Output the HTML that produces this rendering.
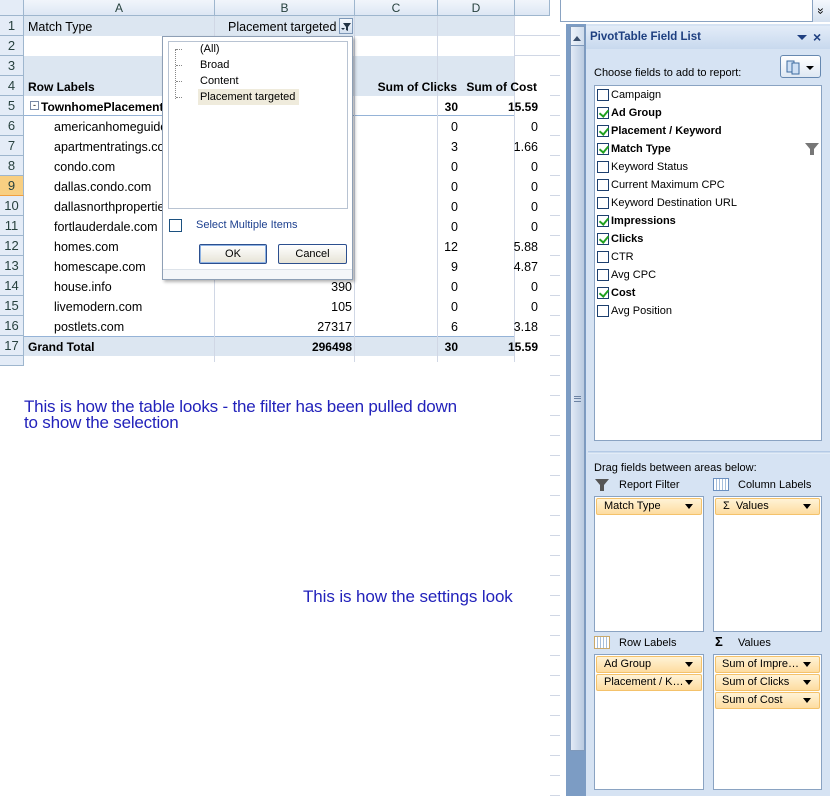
<!DOCTYPE html><html><head><meta charset="utf-8"><style>
*{margin:0;padding:0;box-sizing:border-box}
body{width:830px;height:796px;position:relative;overflow:hidden;background:#fff;font-family:"Liberation Sans",sans-serif}
.a{position:absolute;white-space:nowrap}
.c{position:absolute;font-size:12.5px;color:#000;line-height:20px;height:20px;white-space:nowrap;overflow:hidden}
.r{text-align:right}
.b{font-weight:bold}
.c.b{font-size:12px}
.hl{position:absolute;height:1px;background:#d0d7e5}
.vl{position:absolute;width:1px;background:#d0d7e5}
.rh{position:absolute;left:0;width:24px;height:20px;font-size:13px;line-height:20px;text-align:center;color:#27413e;background:#e4ecf7;border-bottom:1px solid #9eb6ce;border-right:1px solid #9eb6ce}
.ch{position:absolute;top:0;height:16px;font-size:12px;line-height:16px;text-align:center;color:#27413e;background:linear-gradient(#f1f5fb,#dde7f4);border-right:1px solid #9eb6ce;border-bottom:1px solid #9eb6ce}
.p{font-family:"Liberation Sans",sans-serif;font-size:11px;color:#000}
.cb{position:absolute;width:12px;height:12px;border:1px solid #1c3f6e;background:#fff}
.ck::after{content:"";position:absolute;left:3px;top:0px;width:4px;height:7px;border:solid #21a121;border-width:0 2px 2px 0;transform:rotate(40deg)}
.fl{position:absolute;font-size:11px;line-height:18px;height:18px}
.box{position:absolute;background:#fff;border:1px solid #8aa3c2}
.pill{position:absolute;height:17px;border:1px solid #f4c26b;border-radius:2px;background:linear-gradient(#fff3d6,#fddca0);font-size:11px;line-height:15px;padding-left:7px}
.pill::after{content:"";position:absolute;right:8px;top:5px;border:4px solid transparent;border-top:5px solid #000}
</style></head><body>
<div class="ch" style="left:0;width:24px;background:#e4ecf7"></div>
<div class="ch" style="left:24px;width:191px">A</div>
<div class="ch" style="left:215px;width:140px">B</div>
<div class="ch" style="left:355px;width:83px">C</div>
<div class="ch" style="left:438px;width:77px">D</div>
<div class="ch" style="left:515px;width:35px"></div>
<div class="a" style="left:24px;top:16px;width:491px;height:20px;background:#dce6f1"></div>
<div class="a" style="left:24px;top:56px;width:491px;height:40px;background:#dce6f1"></div>
<div class="a" style="left:24px;top:336px;width:491px;height:20px;background:#dce6f1;border-top:1px solid #95b3d7"></div>
<div class="a" style="left:24px;top:115px;width:491px;height:1px;background:#95b3d7"></div>
<div class="vl" style="left:214px;top:16px;height:346px"></div>
<div class="vl" style="left:354px;top:16px;height:346px"></div>
<div class="vl" style="left:437px;top:16px;height:346px"></div>
<div class="vl" style="left:514px;top:16px;height:346px"></div>
<div class="hl" style="left:515px;top:35px;width:35px"></div>
<div class="hl" style="left:515px;top:55px;width:35px"></div>
<div class="rh" style="top:16px">1</div><div class="rh" style="top:36px">2</div><div class="rh" style="top:56px">3</div><div class="rh" style="top:76px">4</div><div class="rh" style="top:96px">5</div><div class="rh" style="top:116px">6</div><div class="rh" style="top:136px">7</div><div class="rh" style="top:156px">8</div><div class="rh" style="top:176px;background:#f8cf82;border-bottom-color:#f0a040">9</div><div class="rh" style="top:196px">10</div><div class="rh" style="top:216px">11</div><div class="rh" style="top:236px">12</div><div class="rh" style="top:256px">13</div><div class="rh" style="top:276px">14</div><div class="rh" style="top:296px">15</div><div class="rh" style="top:316px">16</div><div class="rh" style="top:336px">17</div><div class="rh" style="top:356px;height:10px"></div>
<div class="c" style="left:28px;top:17px">Match Type</div>
<div class="c" style="left:228px;top:17px">Placement targeted</div>
<div class="a" style="left:339px;top:18px;width:14px;height:16px;border:1px solid #7e98b8;background:linear-gradient(#f4f8fd,#d5e1f0)"><svg width="12" height="14"><path d="M3 4h8l-3 4v4l-2-1V8z" fill="#234"/><path d="M1 9l2 2 2-2z" fill="#234"/></svg></div>
<div class="c b" style="left:28px;top:77px">Row Labels</div>
<div class="c b r" style="left:355px;top:77px;width:102px">Sum of Clicks</div>
<div class="c b r" style="left:438px;top:77px;width:99px">Sum of Cost</div>
<div class="a" style="left:30px;top:101px;width:9px;height:9px;border:1px solid #7a8aa6;font-size:9px;line-height:6px;text-align:center">-</div>
<div class="c b" style="left:41px;top:97px;width:121px">TownhomePlacement</div>
<div class="c b r" style="left:355px;top:97px;width:103px">30</div>
<div class="c b r" style="left:438px;top:97px;width:100px">15.59</div>
<div class="c" style="left:54px;top:117px;width:108px">americanhomeguide</div><div class="c r" style="left:355px;top:117px;width:103px">0</div><div class="c r" style="left:438px;top:117px;width:100px">0</div>
<div class="c" style="left:54px;top:137px;width:108px">apartmentratings.com</div><div class="c r" style="left:355px;top:137px;width:103px">3</div><div class="c r" style="left:438px;top:137px;width:100px">1.66</div>
<div class="c" style="left:54px;top:157px">condo.com</div><div class="c r" style="left:355px;top:157px;width:103px">0</div><div class="c r" style="left:438px;top:157px;width:100px">0</div>
<div class="c" style="left:54px;top:177px">dallas.condo.com</div><div class="c r" style="left:355px;top:177px;width:103px">0</div><div class="c r" style="left:438px;top:177px;width:100px">0</div>
<div class="c" style="left:54px;top:197px;width:108px">dallasnorthproperties</div><div class="c r" style="left:355px;top:197px;width:103px">0</div><div class="c r" style="left:438px;top:197px;width:100px">0</div>
<div class="c" style="left:54px;top:217px;width:108px">fortlauderdale.com</div><div class="c r" style="left:355px;top:217px;width:103px">0</div><div class="c r" style="left:438px;top:217px;width:100px">0</div>
<div class="c" style="left:54px;top:237px">homes.com</div><div class="c r" style="left:355px;top:237px;width:103px">12</div><div class="c r" style="left:438px;top:237px;width:100px">5.88</div>
<div class="c" style="left:54px;top:257px">homescape.com</div><div class="c r" style="left:355px;top:257px;width:103px">9</div><div class="c r" style="left:438px;top:257px;width:100px">4.87</div>
<div class="c" style="left:54px;top:277px">house.info</div><div class="c r" style="left:215px;top:277px;width:137px">390</div><div class="c r" style="left:355px;top:277px;width:103px">0</div><div class="c r" style="left:438px;top:277px;width:100px">0</div>
<div class="c" style="left:54px;top:297px">livemodern.com</div><div class="c r" style="left:215px;top:297px;width:137px">105</div><div class="c r" style="left:355px;top:297px;width:103px">0</div><div class="c r" style="left:438px;top:297px;width:100px">0</div>
<div class="c" style="left:54px;top:317px">postlets.com</div><div class="c r" style="left:215px;top:317px;width:137px">27317</div><div class="c r" style="left:355px;top:317px;width:103px">6</div><div class="c r" style="left:438px;top:317px;width:100px">3.18</div>
<div class="c b" style="left:28px;top:337px">Grand Total</div><div class="c b r" style="left:215px;top:337px;width:137px">296498</div><div class="c b r" style="left:355px;top:337px;width:103px">30</div><div class="c b r" style="left:438px;top:337px;width:100px">15.59</div>
<!-- popup -->
<div class="a" style="left:162px;top:36px;width:191px;height:244px;background:#fff;border:1px solid #8e9fb5;box-shadow:2px 2px 3px rgba(0,0,0,.3)">
 <div class="a" style="left:5px;top:4px;width:180px;height:168px;border:1px solid #b8c3d2"></div>
 <div class="a" style="left:12px;top:12px;width:1px;height:50px;border-left:1px dotted #888"></div>
 <div class="a" style="left:13px;top:12px;width:6px;border-top:1px dotted #888"></div>
 <div class="a" style="left:13px;top:28px;width:6px;border-top:1px dotted #888"></div>
 <div class="a" style="left:13px;top:44px;width:6px;border-top:1px dotted #888"></div>
 <div class="a" style="left:13px;top:60px;width:6px;border-top:1px dotted #888"></div>
 <div class="a p" style="left:37px;top:4px;line-height:16px">(All)</div>
 <div class="a p" style="left:37px;top:20px;line-height:16px">Broad</div>
 <div class="a p" style="left:37px;top:36px;line-height:16px">Content</div>
 <div class="a p" style="left:35px;top:52px;line-height:16px;background:#efebdc;padding:0 4px 0 2px">Placement targeted</div>
 <div class="a" style="left:6px;top:182px;width:13px;height:13px;border:1px solid #1c5180"></div>
 <div class="a p" style="left:33px;top:182px;color:#1c3f8e">Select Multiple Items</div>
 <div class="a p" style="left:36px;top:207px;width:68px;height:20px;border:1px solid #2c4f8e;border-radius:2px;background:linear-gradient(#fff,#e6e3d6);text-align:center;line-height:18px;box-shadow:inset 0 0 0 1px #8db2e3">OK</div>
 <div class="a p" style="left:115px;top:207px;width:69px;height:20px;border:1px solid #2c4f8e;border-radius:2px;background:linear-gradient(#fff,#e6e3d6);text-align:center;line-height:18px">Cancel</div>
 <div class="a" style="left:0;top:232px;width:189px;height:10px;border-top:1px solid #dde3ea;background:#f4f6f9"></div>
</div>
<div class="a" style="left:24px;top:399px;font-size:17px;line-height:16px;color:#2222bb;letter-spacing:-0.2px">This is how the table looks - the filter has been pulled down<br>to show the selection</div>
<div class="a" style="left:303px;top:587px;font-size:17px;color:#2222bb;letter-spacing:-0.1px">This is how the settings look</div>
<!-- right strip gridline ticks -->
<div class="a" style="left:550px;top:16px;width:10px;height:780px;background:repeating-linear-gradient(to bottom,transparent 0 19px,#d0d7e5 19px 20px)"></div>
<!-- top bar -->
<div class="a" style="left:560px;top:0;width:270px;height:22px;background:#fff;border-bottom:1px solid #8aa3c2;border-left:1px solid #8aa3c2"></div>
<div class="a" style="left:812px;top:0;width:18px;height:22px;background:linear-gradient(#f4f8fd,#d4e0ef);border-left:1px solid #8aa3c2"></div>
<div class="a" style="left:812px;top:2px;width:18px;height:18px;font-size:12px;text-align:center;line-height:18px;transform:rotate(90deg)">»</div>
<!-- scrollbar -->
<div class="a" style="left:566px;top:24px;width:20px;height:772px;background:#7c9cc4"></div>
<div class="a" style="left:570px;top:26px;width:15px;height:725px;background:linear-gradient(90deg,#e3ebf6,#b9cae0);border:1px solid #7f99bb"></div>
<div class="a" style="left:570px;top:26px;width:15px;height:20px;background:linear-gradient(90deg,#eef3fa,#cfdcec);border:1px solid #7f99bb"></div>
<div class="a" style="left:573px;top:36px;border:4px solid transparent;border-bottom:5px solid #3b4f6c;border-top:0"></div>
<div class="a" style="left:574px;top:396px;width:7px;height:6px;border-top:1px solid #6d83a3;border-bottom:1px solid #6d83a3"></div>
<div class="a" style="left:574px;top:398px;width:7px;height:1px;background:#6d83a3"></div>
<!-- panel -->
<div class="a" style="left:586px;top:24px;width:244px;height:772px;background:#d6e3f3"></div>
<div class="a" style="left:586px;top:26px;width:244px;height:23px;background:linear-gradient(#e3ecf8,#c8d9ee)"></div>
<div class="a" style="left:590px;top:31px;font-size:11.5px;font-weight:bold;color:#1e3f80">PivotTable Field List</div>
<div class="a" style="left:797px;top:35px;border:5px solid transparent;border-top:5px solid #1e3f80;border-bottom:0"></div>
<div class="a" style="left:813px;top:29px;font-size:14px;color:#1e3f80;font-weight:bold">×</div>
<div class="a p" style="left:594px;top:67px">Choose fields to add to report:</div>
<div class="a" style="left:780px;top:55px;width:41px;height:23px;border:1px solid #6688b0;border-radius:3px;background:linear-gradient(#fff,#dfe8f3)"><svg width="40" height="22"><rect x="6" y="5" width="7" height="11" fill="#cfe0f5" stroke="#3e6ba0"/><rect x="11" y="7" width="7" height="11" fill="#cfe0f5" stroke="#3e6ba0"/><path d="M25 10h8l-4 4z" fill="#000"/></svg></div>
<div class="box" style="left:594px;top:85px;width:228px;height:356px"></div>
<div class="cb" style="left:597px;top:89px"></div><div class="fl" style="left:611px;top:86px">Campaign</div>
<div class="cb ck" style="left:597px;top:107px"></div><div class="fl b" style="left:611px;top:104px">Ad Group</div>
<div class="cb ck" style="left:597px;top:125px"></div><div class="fl b" style="left:611px;top:122px">Placement / Keyword</div>
<div class="cb ck" style="left:597px;top:143px"></div><div class="fl b" style="left:611px;top:140px">Match Type</div>
<svg class="a" style="left:805px;top:143px" width="14" height="12"><path d="M0 0h14l-5 6v6h-4v-6z" fill="#777"/></svg>
<div class="cb" style="left:597px;top:161px"></div><div class="fl" style="left:611px;top:158px">Keyword Status</div>
<div class="cb" style="left:597px;top:179px"></div><div class="fl" style="left:611px;top:176px">Current Maximum CPC</div>
<div class="cb" style="left:597px;top:197px"></div><div class="fl" style="left:611px;top:194px">Keyword Destination URL</div>
<div class="cb ck" style="left:597px;top:215px"></div><div class="fl b" style="left:611px;top:212px">Impressions</div>
<div class="cb ck" style="left:597px;top:233px"></div><div class="fl b" style="left:611px;top:230px">Clicks</div>
<div class="cb" style="left:597px;top:251px"></div><div class="fl" style="left:611px;top:248px">CTR</div>
<div class="cb" style="left:597px;top:269px"></div><div class="fl" style="left:611px;top:266px">Avg CPC</div>
<div class="cb ck" style="left:597px;top:287px"></div><div class="fl b" style="left:611px;top:284px">Cost</div>
<div class="cb" style="left:597px;top:305px"></div><div class="fl" style="left:611px;top:302px">Avg Position</div>
<div class="a" style="left:588px;top:451px;width:242px;height:3px;background:linear-gradient(#a9c2e2,#eef4fb)"></div>
<div class="a p" style="left:594px;top:462px">Drag fields between areas below:</div>
<svg class="a" style="left:595px;top:479px" width="14" height="12"><path d="M0 0h14l-5 6v6h-4v-6z" fill="#555"/></svg>
<div class="a p" style="left:619px;top:479px">Report Filter</div>
<div class="a" style="left:713px;top:478px;width:16px;height:13px;border:1px solid #6a8fbf;background:repeating-linear-gradient(90deg,#fff 0 2px,#a6bfdc 2px 3px),#fff"></div>
<div class="a p" style="left:738px;top:479px">Column Labels</div>
<div class="box" style="left:594px;top:496px;width:110px;height:136px"></div>
<div class="box" style="left:713px;top:496px;width:109px;height:136px"></div>
<div class="pill" style="left:596px;top:498px;width:106px">Match Type</div>
<div class="pill" style="left:715px;top:498px;width:105px">Σ&nbsp; Values</div>
<div class="a" style="left:594px;top:636px;width:16px;height:13px;border:1px solid #c9a86a;background:repeating-linear-gradient(90deg,#fff 0 2px,#a6bfdc 2px 3px),#fff"></div>
<div class="a p" style="left:619px;top:637px">Row Labels</div>
<div class="a" style="left:715px;top:634px;font-size:13px;font-weight:bold">Σ</div>
<div class="a p" style="left:738px;top:637px">Values</div>
<div class="box" style="left:594px;top:654px;width:110px;height:136px"></div>
<div class="box" style="left:713px;top:654px;width:109px;height:136px"></div>
<div class="pill" style="left:596px;top:656px;width:106px">Ad Group</div>
<div class="pill" style="left:596px;top:674px;width:106px">Placement / K…</div>
<div class="pill" style="left:715px;top:656px;width:105px;padding-left:6px">Sum of Impre…</div>
<div class="pill" style="left:715px;top:674px;width:105px;padding-left:6px">Sum of Clicks</div>
<div class="pill" style="left:715px;top:692px;width:105px;padding-left:6px">Sum of Cost</div>
</body></html>
